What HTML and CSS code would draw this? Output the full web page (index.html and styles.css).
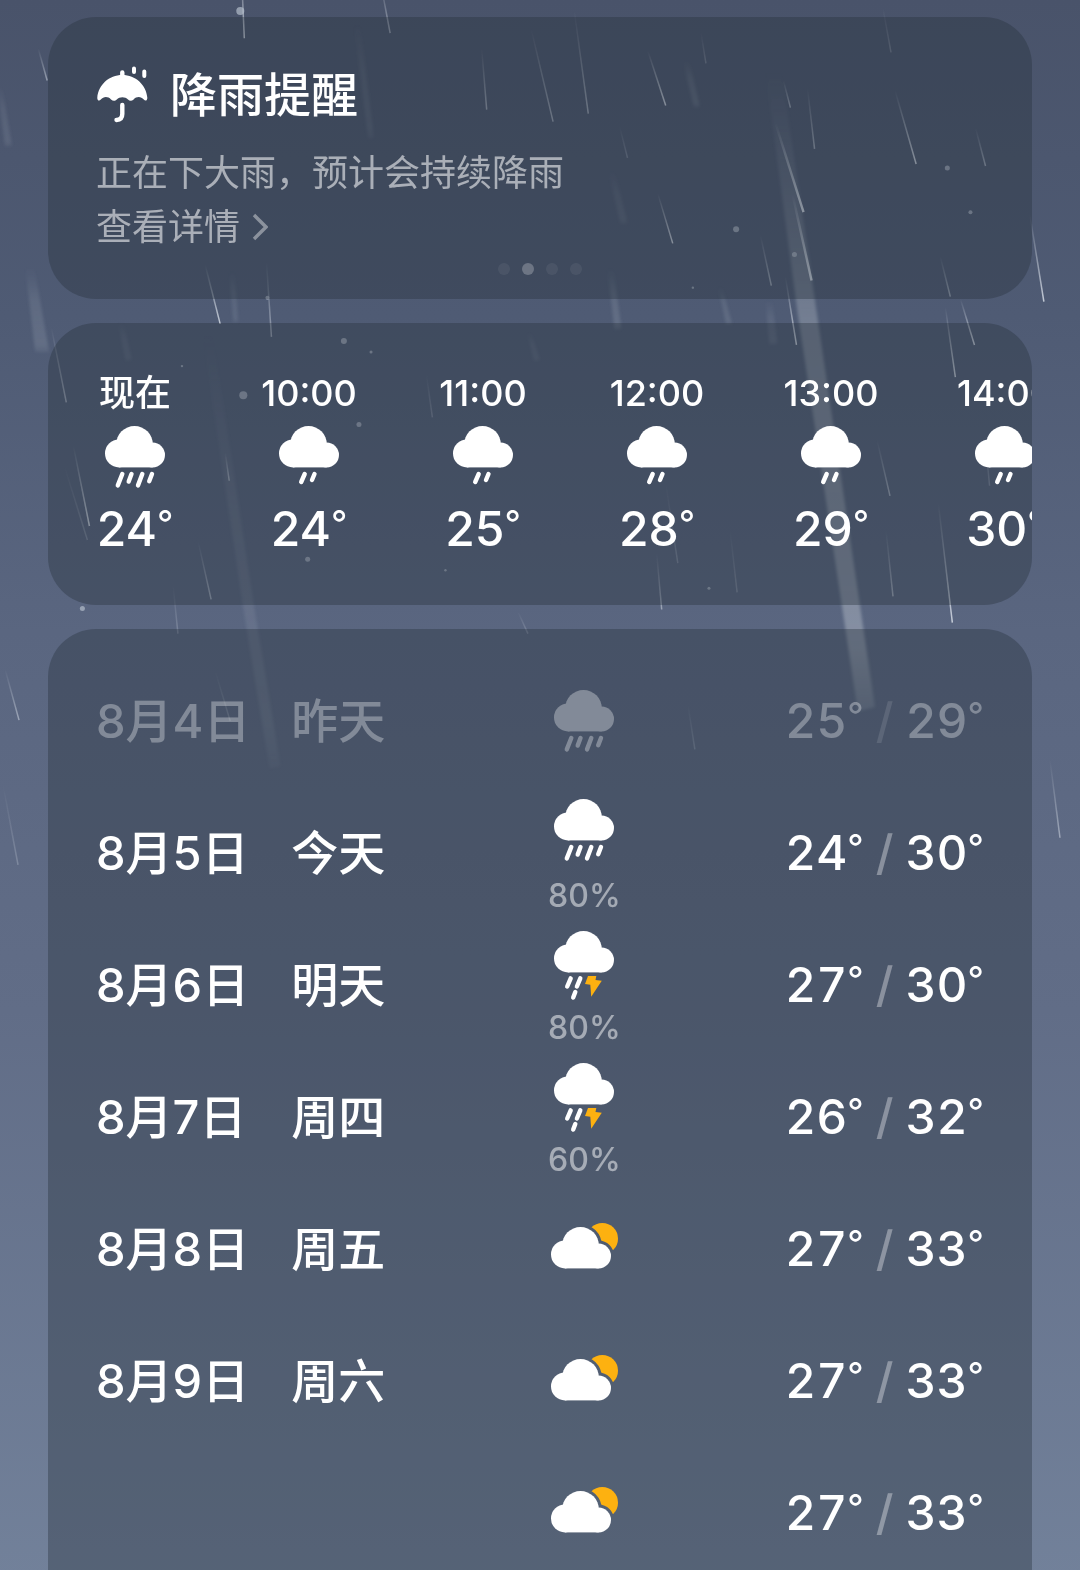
FILE: index.html
```html
<!DOCTYPE html>
<html lang="zh-CN">
<head>
<meta charset="utf-8">
<meta name="viewport" content="width=device-width, initial-scale=1">
<title>天气</title>
<link rel="stylesheet" href="styles.css">
</head>
<body>
<svg class="rain" viewBox="0 0 1080 1570" preserveAspectRatio="xMidYMin slice" aria-hidden="true">
  <defs>
    <linearGradient id="fall" x1="0" y1="0" x2="0" y2="1">
      <stop offset="0" stop-color="#dfe5ee" stop-opacity="0"/>
      <stop offset="1" stop-color="#dfe5ee"/>
    </linearGradient>
    <linearGradient id="shaft" x1="0" y1="0" x2="0" y2="1">
      <stop offset="0" stop-color="#cdd3dc" stop-opacity="0"/>
      <stop offset="0.4" stop-color="#cdd3dc" stop-opacity="0.8"/>
      <stop offset="0.9" stop-color="#cdd3dc"/>
      <stop offset="1" stop-color="#cdd3dc" stop-opacity="0.5"/>
    </linearGradient>
    <filter id="soft" x="-50%" y="-5%" width="200%" height="110%"><feGaussianBlur stdDeviation="1.5"/></filter>
  </defs>
  <g class="soft" fill="url(#shaft)" filter="url(#soft)">
    <path opacity=".38" d="M764 70 L780 70 L815 310 L873 703 L856 707 L796 310 Z"/>
    <path opacity=".12" d="M204 330 L214 330 L256 605 L282 762 L271 764 L245 605 Z"/>
    <path opacity=".1" d="M355 23 L361 23 L375 137 L369 138 Z"/>
    <path opacity=".16" d="M607 267 L613 267 L621 327 L614 328 Z"/>
    <path opacity=".14" d="M717 285 L721 285 L731 322 L725 323 Z"/>
    <path opacity=".12" d="M764 298 L771 298 L776 342 L768 343 Z"/>
    <path opacity=".14" d="M682 60 L688 60 L699 106 L693 107 Z"/>
    <path opacity=".16" d="M28 265 L37 265 L52 350 L38 350 Z"/>
    <path opacity=".12" d="M0 85 L5 85 L15 145 L8 146 Z"/>
    <path opacity=".1" d="M608 170 L614 170 L627 222 L620 223 Z"/>
    <path opacity=".12" d="M231 270 L236 270 L240 320 L235 321 Z"/>
    <path opacity=".1" d="M120 320 L126 320 L134 358 L128 359 Z"/>
    <path opacity=".1" d="M527 330 L531 330 L540 358 L534 359 Z"/>
  </g>
  <g class="streaks" stroke="url(#fall)">
    <g opacity=".85" stroke-width="2.4">
      <path d="M774 122 L802 211"/><path d="M791 193 L810 279"/>
    </g>
    <g opacity=".8">
      <path d="M243 -30 L246 38"/><path d="M207 263 L222 322"/><path d="M784 275 L795 343"/>
      <path d="M893 90 L914 163"/><path d="M1027 213 L1041 300"/><path d="M958 297 L972 343"/>
      <path d="M943 305 L953 375"/><path d="M936 500 L950 619"/><path d="M76 443 L92 523"/>
      <path d="M647 50 L665 105"/><path d="M657 192 L672 242"/>
    </g>
    <g opacity=".5">
      <path d="M381 -20 L391 33"/><path d="M482 48 L487 109"/><path d="M531 28 L553 121"/>
      <path d="M41 48 L50 80"/><path d="M574 10 L588 113"/><path d="M759 233 L770 284"/>
      <path d="M806 88 L813 148"/><path d="M973 127 L983 165"/><path d="M782 80 L789 107"/>
      <path d="M938 255 L948 295"/><path d="M200 538 L213 596"/><path d="M227 450 L231 478"/>
      <path d="M54 325 L69 400"/><path d="M875 437 L888 493"/><path d="M884 527 L891 593"/>
      <path d="M656 550 L661 606"/><path d="M8 665 L22 716"/><path d="M1047 755 L1057 833"/>
      <path d="M268 260 L273 335"/>
    </g>
    <g opacity=".25">
      <path d="M881 8 L889 52"/><path d="M700 32 L705 63"/><path d="M619 125 L627 157"/>
      <path d="M67 463 L90 537"/><path d="M729 527 L736 589"/><path d="M982 430 L987 483"/>
      <path d="M6 780 L21 860"/><path d="M217 667 L232 717"/><path d="M427 372 L433 415"/>
      <path d="M665 480 L677 560"/><path d="M687 700 L694 745"/><path d="M518 608 L528 630"/>
      <path d="M175 580 L180 630"/>
    </g>
  </g>
  <g class="drops">
    <circle cx="242" cy="11" r="4"/><circle cx="945" cy="167" r="2.5"/><circle cx="968" cy="211" r="2"/>
    <circle cx="735" cy="228" r="3"/><circle cx="793" cy="253" r="2.5"/><circle cx="692" cy="286" r="1.2"/>
    <circle cx="269" cy="296" r="2"/><circle cx="345" cy="339" r="3"/><circle cx="372" cy="350" r="1.5"/>
    <circle cx="245" cy="393" r="4"/><circle cx="360" cy="422" r="2.5"/><circle cx="309" cy="556" r="2.5"/>
    <circle cx="85" cy="605" r="2.5"/><circle cx="446" cy="567" r="1.2"/><circle cx="708" cy="585" r="1.5"/>
    <circle cx="184" cy="364" r="1.2"/><circle cx="1" cy="636" r="2"/>
  </g>
</svg>

<svg class="sprite" width="0" height="0" aria-hidden="true">
  <symbol id="cloud" viewBox="0 0 60 42">
    <circle cx="29.5" cy="18.3" r="18.3"/><circle cx="14" cy="27.4" r="14"/><circle cx="47.6" cy="29" r="12.4"/>
    <rect x="14" y="20" width="33.6" height="21.4"/>
  </symbol>
  <symbol id="heavy-rain" viewBox="0 0 72 76">
    <use href="#cloud" x="6" y="5" width="60" height="42"/>
    <path class="drop" d="M23.3 53 L18.8 64.4 M32.5 53 L29.7 60.6 M43.3 53 L39 64.4 M53 53 L50.2 60.2"/>
  </symbol>
  <symbol id="light-rain" viewBox="0 0 72 76">
    <use href="#cloud" x="6" y="5" width="60" height="42"/>
    <path class="drop" d="M31.7 53 L28.2 61 M41.5 53 L39 59"/>
  </symbol>
  <symbol id="thunder" viewBox="0 0 72 76">
    <use href="#cloud" x="6" y="5" width="60" height="42"/>
    <path class="drop" d="M22.7 52.4 L19.2 60.5 M32.3 52.4 L28.9 60.5 M27.3 66 L25.2 71.6"/>
    <path class="bolt" d="M40 50 H48.3 L47.5 54 L53.8 54.7 L43.2 70.7 L42.3 58.7 L37 58 Z"/>
  </symbol>
  <symbol id="cloudy" viewBox="0 0 72 76">
    <mask id="gap">
      <rect width="72" height="76" fill="#fff"/>
      <g stroke="#000" stroke-width="6" fill="#000">
        <circle cx="32.5" cy="32.3" r="18.3"/><circle cx="50.6" cy="43" r="12.4"/>
      </g>
    </mask>
    <circle class="sun" cx="54.3" cy="25.7" r="15.7" mask="url(#gap)"/>
    <use href="#cloud" x="3" y="14" width="60" height="42"/>
  </symbol>
</svg>

<main class="page">
  <section class="card alert">
    <h2 class="alert-title">
      <svg class="umbrella" viewBox="0 1 52 60" aria-hidden="true">
        <path d="M1.3 33.5 C2.3 21 13 11 26.3 11 C39.6 11 50.3 21 51.3 33.5 C51.6 36.8 49.2 37.4 47.8 35.6 C45 32.2 40.6 32.2 37.6 35.4 C35.6 37.4 33.6 37.2 32 35.4 C29.2 32.4 23.6 32.4 20.8 35.4 C19.2 37.2 17 37.4 15 35.4 C12 32.2 7.6 32.2 4.8 35.6 C3.4 37.4 1 36.8 1.3 33.5 Z"/>
        <path class="line" d="M26.3 8.5 V13 M26.3 41 V50 Q26.3 55.8 20.5 56"/>
        <path class="line thin" d="M38 4.6 V8 M48.3 7.6 V12"/>
      </svg>
      <span>降雨提醒</span>
    </h2>
    <p class="alert-text">正在下大雨，预计会持续降雨</p>
    <a class="alert-link" href="#details">查看详情<svg class="chevron" viewBox="0 0 16 28" aria-hidden="true"><path d="M2 2 L14 14 L2 26"/></svg></a>
    <div class="dots" aria-hidden="true"><span></span><span class="on"></span><span></span><span></span></div>
  </section>

  <section class="card hourly">
    <ul class="hours">
      <li class="hour"><span class="time">现在</span><svg class="icon" role="img" aria-label="大雨"><use href="#heavy-rain"/></svg><span class="temp">24<span class="deg">°</span></span></li>
      <li class="hour"><span class="time">10:00</span><svg class="icon" role="img" aria-label="小雨"><use href="#light-rain"/></svg><span class="temp">24<span class="deg">°</span></span></li>
      <li class="hour"><span class="time">11:00</span><svg class="icon" role="img" aria-label="小雨"><use href="#light-rain"/></svg><span class="temp">25<span class="deg">°</span></span></li>
      <li class="hour"><span class="time">12:00</span><svg class="icon" role="img" aria-label="小雨"><use href="#light-rain"/></svg><span class="temp">28<span class="deg">°</span></span></li>
      <li class="hour"><span class="time">13:00</span><svg class="icon" role="img" aria-label="小雨"><use href="#light-rain"/></svg><span class="temp">29<span class="deg">°</span></span></li>
      <li class="hour"><span class="time">14:00</span><svg class="icon" role="img" aria-label="小雨"><use href="#light-rain"/></svg><span class="temp">30<span class="deg">°</span></span></li>
    </ul>
  </section>

  <section class="card daily" id="details">
    <table class="days">
      <tbody>
        <tr class="past"><td>8月4日</td><td>昨天</td><td class="sky"><svg class="icon" role="img" aria-label="大雨"><use href="#heavy-rain"/></svg></td><td class="range">25<span class="deg">°</span><span class="slash">/</span>29<span class="deg">°</span></td></tr>
        <tr><td>8月5日</td><td>今天</td><td class="sky"><svg class="icon" role="img" aria-label="大雨"><use href="#heavy-rain"/></svg><span class="chance">80%</span></td><td class="range">24<span class="deg">°</span><span class="slash">/</span>30<span class="deg">°</span></td></tr>
        <tr><td>8月6日</td><td>明天</td><td class="sky"><svg class="icon" role="img" aria-label="雷阵雨"><use href="#thunder"/></svg><span class="chance">80%</span></td><td class="range">27<span class="deg">°</span><span class="slash">/</span>30<span class="deg">°</span></td></tr>
        <tr><td>8月7日</td><td>周四</td><td class="sky"><svg class="icon" role="img" aria-label="雷阵雨"><use href="#thunder"/></svg><span class="chance">60%</span></td><td class="range">26<span class="deg">°</span><span class="slash">/</span>32<span class="deg">°</span></td></tr>
        <tr><td>8月8日</td><td>周五</td><td class="sky"><svg class="icon" role="img" aria-label="多云"><use href="#cloudy"/></svg></td><td class="range">27<span class="deg">°</span><span class="slash">/</span>33<span class="deg">°</span></td></tr>
        <tr><td>8月9日</td><td>周六</td><td class="sky"><svg class="icon" role="img" aria-label="多云"><use href="#cloudy"/></svg></td><td class="range">27<span class="deg">°</span><span class="slash">/</span>33<span class="deg">°</span></td></tr>
        <tr><td></td><td></td><td class="sky"><svg class="icon" role="img" aria-label="多云"><use href="#cloudy"/></svg></td><td class="range">27<span class="deg">°</span><span class="slash">/</span>33<span class="deg">°</span></td></tr>
      </tbody>
    </table>
  </section>
</main>
</body>
</html>
```
FILE: styles.css
```css
* {
  box-sizing: border-box;
}

body {
  margin: 0;
  position: relative;
  overflow-x: hidden;
  background: linear-gradient(#49536a, #4f5b74 20%, #5a6680 40%, #616d87 64%, #72819a);
  color: #fff;
  font-family: Inter, "Noto Sans CJK SC", sans-serif;
  font-size: 48px;
  font-weight: 500;
}

.rain {
  position: absolute;
  inset: 0;
  width: 100%;
  height: 100%;
}

.streaks {
  fill: none;
  stroke-width: 1.5;
}

.drops {
  fill: #b4bdcb;
  opacity: .7;
}

.sprite {
  position: absolute;
}

.page {
  position: relative;
  display: flex;
  flex-direction: column;
  gap: 24px;
  padding: 17px 48px 0;
}

.card {
  border-radius: 48px;
  background: rgba(40, 50, 61, .38);
  overflow: hidden;
}

/* Rain alert */
.alert {
  padding: 48px 48px 24px;
}

.alert-title {
  display: flex;
  align-items: center;
  gap: 22px;
  margin: 0 0 21px;
  font-size: 47px;
  font-weight: 500;
  line-height: 60px;
}

.umbrella {
  width: 52px;
  height: 60px;
  fill: #fff;
}

.line {
  fill: none;
  stroke: #fff;
  stroke-width: 4.4;
  stroke-linecap: round;
}

.thin {
  stroke-width: 4;
}

.alert-text,
.alert-link {
  margin: 0;
  color: rgba(255, 255, 255, .56);
  font-size: 36px;
  font-weight: 400;
  line-height: 54px;
}

.alert-link {
  display: flex;
  align-items: center;
  gap: 12px;
  text-decoration: none;
}

.chevron {
  width: 16px;
  height: 28px;
  fill: none;
  stroke: rgba(255, 255, 255, .4);
  stroke-width: 3.4;
}

.dots {
  display: flex;
  justify-content: center;
  gap: 12px;
  margin-top: 9px;
}

.dots span {
  width: 12px;
  height: 12px;
  border-radius: 50%;
  background: rgba(255, 255, 255, .06);
}

.dots .on {
  background: rgba(255, 255, 255, .24);
}

/* Weather icons */
.icon {
  display: block;
  flex: none;
  width: 72px;
  height: 76px;
  margin-bottom: -4px;
  fill: #fff;
}

.drop {
  fill: none;
  stroke: #fff;
  stroke-width: 4.4;
  stroke-linecap: round;
}

.bolt,
.sun {
  fill: #fdb110;
}

.deg {
  font-size: 36px;
  font-weight: 400;
  line-height: 0;
  vertical-align: 10px;
}

/* Hourly forecast */
.hours {
  display: flex;
  margin: 0;
  padding: 48px 0 46px;
  list-style: none;
}

.hour {
  flex: 0 0 174px;
  display: flex;
  flex-direction: column;
  align-items: center;
  gap: 6px;
}

.time {
  font-size: 36px;
  line-height: 44px;
}

.temp {
  line-height: 60px;
}

/* Daily forecast */
.daily {
  padding: 26px 48px 0;
  border-radius: 48px 48px 0 0;
}

.days {
  width: 100%;
  table-layout: fixed;
  border-collapse: collapse;
}

.days td {
  width: 22%;
  height: 132px;
  padding: 0;
  font-size: 47px;
  line-height: 60px;
  vertical-align: middle;
  white-space: nowrap;
}

.days .range {
  width: 34%;
  font-size: 48px;
  text-align: right;
  font-variant-numeric: tabular-nums;
}

.past {
  opacity: .32;
}

.sky .icon {
  margin: 0 auto -4px;
}

.chance {
  display: block;
  margin-top: 14px;
  color: rgba(255, 255, 255, .5);
  font-size: 32px;
  line-height: 32px;
  text-align: center;
}

.slash {
  margin: 0 12px;
  opacity: .35;
}
```
